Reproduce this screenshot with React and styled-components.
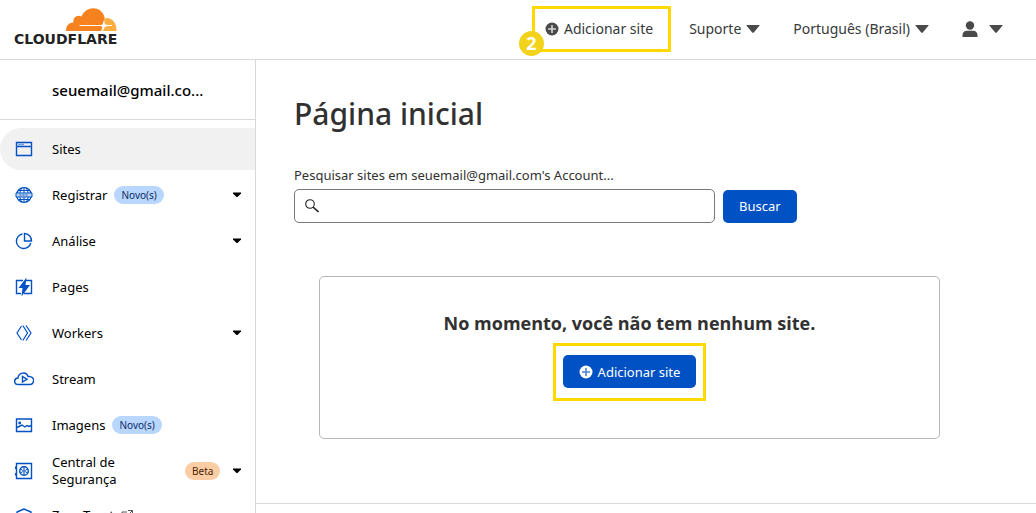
import styled, { createGlobalStyle } from "styled-components";

const GlobalStyle = createGlobalStyle`
    *, *::before, *::after {
        box-sizing: border-box;
    }

    body {
        margin: 0;
        background: #fff;
        color: #313131;
        font-family: "Noto Sans", "Open Sans", sans-serif;
        font-size: 14px;
    }

    button, input {
        font: inherit;
    }
`;

const Shell = styled.div`
    display: flex;
    flex-direction: column;
    height: 100vh;
    overflow: hidden;
`;

const Header = styled.header`
    display: flex;
    flex: none;
    align-items: center;
    justify-content: space-between;
    height: 60px;
    padding: 0 33px 2px 14px;
    border-bottom: 1px solid #d9d9d9;
`;

const Logo = styled.a`
    display: flex;
    flex-direction: column;
    align-items: flex-end;
    margin-bottom: 4px;
    color: #222;
    font-family: "DejaVu Sans", sans-serif;
    font-size: 14px;
    font-weight: 700;
    line-height: 14px;
    text-decoration: none;
`;

const TopNav = styled.nav`
    display: flex;
    align-items: center;
    gap: 18px;
`;

const TopMenus = styled.div`
    display: flex;
    align-items: center;
    gap: 33px;
`;

const TopButton = styled.button`
    display: flex;
    align-items: center;
    gap: ${(props) => (props.$loose ? "11px" : "5px")};
    padding: 0;
    border: none;
    background: none;
    color: #36393a;
    line-height: 20px;
    cursor: pointer;
`;

const Highlight = styled.div`
    position: relative;
    padding: ${(props) => props.$pad};
    border: 3px solid #fdd900;
`;

const StepBadge = styled.span`
    position: absolute;
    left: -16px;
    bottom: -7px;
    width: 25px;
    height: 25px;
    border-radius: 50%;
    background: #f3d21b;
    color: #fff;
    font-size: 18px;
    font-weight: 700;
    line-height: 25px;
    text-align: center;
`;

const Body = styled.div`
    display: flex;
    flex: 1;
    min-height: 0;
`;

const Sidebar = styled.aside`
    flex: none;
    width: 256px;
    overflow: hidden;
    border-right: 1px solid #d9d9d9;
    color: #000;
`;

const Account = styled.div`
    height: 60px;
    padding-left: 52px;
    border-bottom: 1px solid #d9d9d9;
    font-size: 15px;
    font-weight: 500;
    line-height: 60px;
`;

const NavList = styled.ul`
    display: flex;
    flex-direction: column;
    gap: 4px;
    margin: 0;
    padding: 8px 0;
    list-style: none;
`;

const NavLink = styled.a`
    display: flex;
    align-items: center;
    height: 42px;
    padding: 0 13px 0 14px;
    border-radius: 21px 0 0 21px;
    background: ${(props) => (props.$active ? "#f1f1f1" : "transparent")};
    color: #000;
    font-size: 13px;
    line-height: 17px;
    text-decoration: none;

    > svg:first-child {
        flex: none;
        margin-right: 18px;
    }

    > svg:last-child {
        margin-left: auto;
    }
`;

const NavText = styled.span`
    width: ${(props) => (props.$wide ? "133px" : "auto")};
    padding-right: ${(props) => (props.$wide ? "40px" : "7px")};
    padding-bottom: ${(props) => (props.$raised ? "4px" : "0")};
`;

const Tag = styled.span`
    padding: 0 7px;
    border-radius: 9px;
    background: ${(props) => (props.$beta ? "#fbcda5" : "#b9d6ff")};
    color: ${(props) => (props.$beta ? "#4a2504" : "#0c2c66")};
    font-size: 10px;
    line-height: 18px;
`;

const Main = styled.main`
    flex: 1;
    min-width: 0;
`;

const Content = styled.div`
    padding: 32px 96px 64px 38px;
    border-bottom: 1px solid #d9d9d9;
`;

const Title = styled.h1`
    margin: 0;
    font-size: 30px;
    font-weight: 500;
    line-height: 44px;
`;

const SearchForm = styled.form`
    display: flex;
    flex-direction: column;
    gap: 4px;
    margin-top: 29px;
`;

const SearchLabel = styled.label`
    font-size: 13px;
    line-height: 20px;
`;

const SearchRow = styled.div`
    display: flex;
    align-items: center;
    gap: 8px;
`;

const SearchBox = styled.div`
    display: flex;
    flex: 0 1 421px;
    align-items: center;
    height: 34px;
    padding: 0 10px;
    border: 1px solid #797979;
    border-radius: 5px;

    input {
        flex: 1;
        min-width: 0;
        border: none;
        outline: none;
        background: none;
    }
`;

const PrimaryButton = styled.button`
    display: flex;
    align-items: center;
    gap: 5px;
    height: 33px;
    padding: 0 16px;
    border: none;
    border-radius: 5px;
    background: #0051c3;
    color: #fff;
    font-size: 13px;
    cursor: pointer;
`;

const EmptyCard = styled.section`
    display: flex;
    flex-direction: column;
    align-items: center;
    gap: 8px;
    margin: 53px 0 0 25px;
    padding: 34px 0 37px;
    border: 1px solid #b6b6b6;
    border-radius: 5px;
`;

const EmptyTitle = styled.h2`
    margin: 0;
    font-family: "Open Sans", "Noto Sans", sans-serif;
    font-size: 18px;
    font-weight: 700;
    line-height: 24px;
`;

const CloudMark = () => (
    <svg width="51" height="24" viewBox="0 0 51 24" aria-hidden="true">
        <path fill="#f6821f" d="M0 23C0 17.5 3 14.5 7.5 14.5C6.500 10 11 6 15.500 8.500C18 3 22.500 .3 27 .3C33.500 .3 38.500 5 38.800 11.500L37.500 17L35 23Z" />
        <path fill="#fbad41" d="M39.500 10C46 9.500 51 15 50.500 23H36.500L38 17Z" />
        <path fill="#fff" d="M13.500 17H35L36.600 16.300L37.600 12.500L38.800 16.200L42 17H46V18H42L38.800 19L37.400 22.500L36.600 19L34.500 18H13.500Z" />
    </svg>
);

const PlusIcon = ({ disc, cross }) => (
    <svg width="14" height="14" viewBox="0 0 14 14" aria-hidden="true">
        <circle cx="7" cy="7" r="6.5" fill={disc} />
        <path d="M7 3v8M3 7h8" stroke={cross} strokeWidth="1.6" />
    </svg>
);

const Caret = () => (
    <svg width="14" height="8" viewBox="0 0 14 8" aria-hidden="true">
        <path d="M1 0h12q1 0 .4.8L8 7.3q-1 1-2 0L.6.8Q0 0 1 0Z" fill="#4a4a4a" />
    </svg>
);

const SmallCaret = () => (
    <svg width="10" height="6" viewBox="0 0 10 6" aria-hidden="true">
        <path d="M1 .5h8v1L5.500 5h-1L1 1.500Z" fill="#000" />
    </svg>
);

const UserIcon = () => (
    <svg width="16" height="16" viewBox="0 0 16 16" aria-hidden="true">
        <circle cx="8" cy="4.5" r="4.2" fill="#4a4a4a" />
        <path d="M.5 16v-1.500C.5 11 3 9.700 5 9.700h6c2 0 4.500 1.300 4.500 4.800V16Z" fill="#4a4a4a" />
    </svg>
);

const SearchIcon = () => (
    <svg width="14" height="14" viewBox="0 0 14 14" fill="none" stroke="#222" aria-hidden="true">
        <circle cx="5" cy="5" r="4.3" strokeWidth="1.1" />
        <path d="M8 8l5.500 5" strokeWidth="1.6" />
    </svg>
);

const drawings = {
    sites: (
        <>
            <path d="M2.500 3.500h15v13h-15zM2.500 7.500h15" />
            <path d="M4.500 5.500h1M6.500 5.500h1M8.500 5.500h1" />
        </>
    ),
    registrar: (
        <>
            <circle cx="10" cy="10" r="7.4" strokeWidth="1.3" />
            <path d="M8 2.800Q6.200 5 5.800 8M12 2.800Q13.800 5 14.200 8M8 17.200Q6.200 15 5.800 12M12 17.200Q13.800 15 14.200 12" strokeWidth="1" />
            <path d="M10 2.500v5.500M10 12v5.500M4 5.500h12M4 14.500h12" strokeWidth="1" />
            <path d="M2 8h16v4H2z" fill="#c3d8f6" strokeWidth="1" />
            <path d="M5.500 10h9" strokeDasharray="2 1" strokeWidth="1" />
        </>
    ),
    analise: (
        <>
            <path d="M8.500 3A7.300 7.300 0 1 0 16.800 12" />
            <path d="M10.500 2.500v7.500h7A7.300 7.300 0 0 0 10.500 2.500Z" />
        </>
    ),
    pages: (
        <>
            <path d="M9 3.500H2.500v13H7M12 3.500h5.500v13H10" />
            <path d="M12.500 .5L4.500 11h4L7.500 19.500l8.500-11.500h-4.500Z" fill="#0051c3" stroke="none" />
        </>
    ),
    workers: (
        <path d="M7.500 3L3 10l4.500 7M8.800 2.500L13.500 10l-4.700 7.500M12 2.500L17 10l-5 7.500" strokeWidth="1.2" />
    ),
    stream: (
        <>
            <path d="M4.500 15.500C-.5 15.500-.5 9.500 4 9C4.500 3 12.500 2.500 14 7.500C18 7 20.500 9.500 19.300 13Q18.500 15.500 16 15.500Z" />
            <path d="M8.500 7.500v5.500l4.500-2.700Z" />
        </>
    ),
    imagens: (
        <>
            <path d="M2.500 4h15v12.500h-15z" />
            <circle cx="5.700" cy="8" r=".7" fill="#0051c3" />
            <path d="M3 12.500L8 10l3 2 2-1.500 2 1 2.500-1" />
        </>
    ),
    seguranca: (
        <>
            <path d="M2.500 2.500h15v15h-15z" />
            <circle cx="10" cy="10" r="4.300" strokeWidth="1.5" />
            <circle cx="10" cy="10" r="1.200" strokeWidth="1" />
            <path d="M10 6v2.500M10 11.500V14M6.500 8l2 1.200M11.500 10.800l2 1.200M6.500 12l2-1.200M11.500 9.200l2-1.200" strokeWidth="1" />
            <path d="M1.500 5.500v2.500M1.500 12v2.500" strokeWidth="1" />
        </>
    ),
    zeroTrust: (
        <>
            <path d="M10 2L3 5v5c0 4 3 6.500 7 8 4-1.500 7-4 7-8V5Z" />
            <path d="M7 10l2.500 2.500L13.500 8" />
        </>
    ),
};

const NavIcon = ({ name }) => (
    <svg width="20" height="20" viewBox="0 0 20 20" fill="none" stroke="#0051c3" strokeWidth="1.4" aria-hidden="true">
        {drawings[name]}
    </svg>
);

const ExternalIcon = () => (
    <svg width="12" height="12" viewBox="0 0 12 12" fill="none" stroke="#555" aria-hidden="true">
        <path d="M6 2H1v9h9V6M7 .5h4.500V5M11.500 .5L5 7" />
    </svg>
);

const navItems = [
    { icon: "sites", text: "Sites", active: true },
    { icon: "registrar", text: "Registrar", tag: "Novo(s)", caret: true },
    { icon: "analise", text: "Análise", caret: true },
    { icon: "pages", text: "Pages" },
    { icon: "workers", text: "Workers", caret: true },
    { icon: "stream", text: "Stream" },
    { icon: "imagens", text: "Imagens", tag: "Novo(s)" },
    { icon: "seguranca", text: "Central de Segurança", tag: "Beta", beta: true, caret: true },
    { icon: "zeroTrust", text: "Zero Trust", external: true },
];

const NavItem = ({ item }) => (
    <li>
        <NavLink href="#" $active={item.active} aria-current={item.active ? "page" : undefined}>
            <NavIcon name={item.icon} />
            <NavText $wide={item.beta} $raised={item.external}>{item.text}</NavText>
            {item.tag && <Tag $beta={item.beta}>{item.tag}</Tag>}
            {item.external && <span><ExternalIcon /></span>}
            {item.caret && <SmallCaret />}
        </NavLink>
    </li>
);

const App = () => {
    return (
        <>
            <GlobalStyle />
            <Shell>
                <Header>
                    <Logo href="#">
                        <CloudMark />
                        CLOUDFLARE
                    </Logo>
                    <TopNav>
                        <Highlight $pad="10px 15px 10px 10px">
                            <TopButton type="button">
                                <PlusIcon disc="#4a4a4a" cross="#d5d5d5" />
                                Adicionar site
                            </TopButton>
                            <StepBadge>2</StepBadge>
                        </Highlight>
                        <TopMenus>
                            <TopButton type="button">
                                Suporte
                                <Caret />
                            </TopButton>
                            <TopButton type="button">
                                Português (Brasil)
                                <Caret />
                            </TopButton>
                            <TopButton type="button" aria-label="Conta" $loose>
                                <UserIcon />
                                <Caret />
                            </TopButton>
                        </TopMenus>
                    </TopNav>
                </Header>
                <Body>
                    <Sidebar>
                        <Account>seuemail@gmail.co...</Account>
                        <nav>
                            <NavList>
                                {navItems.map((item) => (
                                    <NavItem key={item.icon} item={item} />
                                ))}
                            </NavList>
                        </nav>
                    </Sidebar>
                    <Main>
                        <Content>
                            <Title>Página inicial</Title>
                            <SearchForm onSubmit={(e) => e.preventDefault()}>
                                <SearchLabel htmlFor="search">
                                    Pesquisar sites em seuemail@gmail.com's Account...
                                </SearchLabel>
                                <SearchRow>
                                    <SearchBox>
                                        <SearchIcon />
                                        <input id="search" type="text" />
                                    </SearchBox>
                                    <PrimaryButton type="submit">Buscar</PrimaryButton>
                                </SearchRow>
                            </SearchForm>
                            <EmptyCard>
                                <EmptyTitle>No momento, você não tem nenhum site.</EmptyTitle>
                                <Highlight $pad="9px 7px 10px">
                                    <PrimaryButton type="button">
                                        <PlusIcon disc="#fff" cross="#4a86d8" />
                                        Adicionar site
                                    </PrimaryButton>
                                </Highlight>
                            </EmptyCard>
                        </Content>
                    </Main>
                </Body>
            </Shell>
        </>
    );
};

export default App;
